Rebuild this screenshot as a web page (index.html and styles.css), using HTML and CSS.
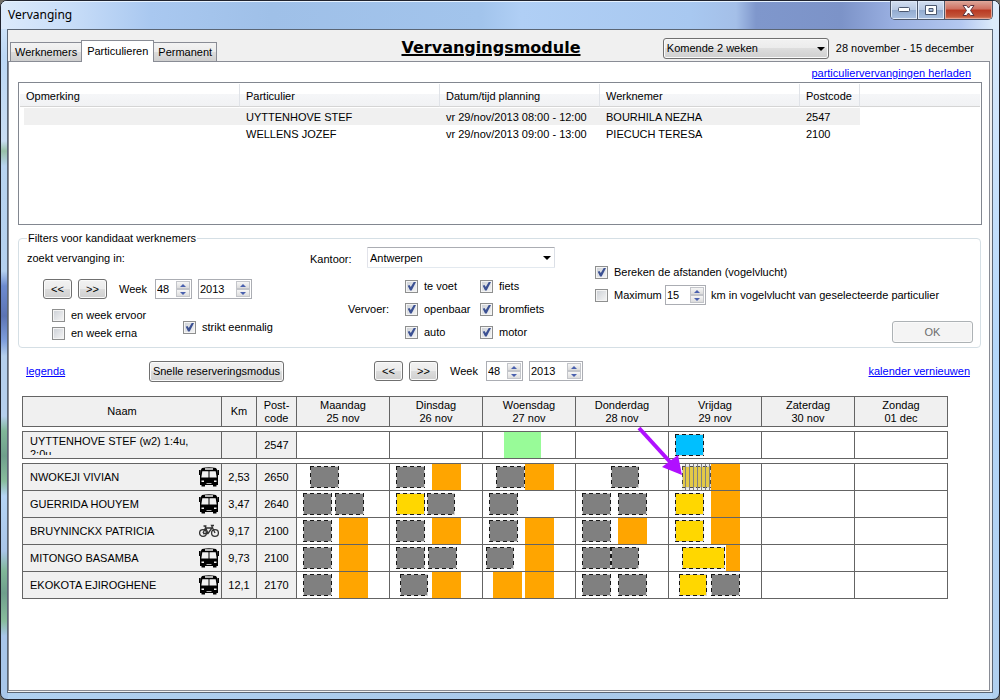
FILE: index.html
```html
<!DOCTYPE html>
<html lang="nl">
<head>
<meta charset="utf-8">
<title>Vervanging</title>
<link rel="stylesheet" href="styles.css">
</head>
<body>
<svg class="defs" aria-hidden="true">
  <symbol id="bus" viewBox="0 0 20 20">
    <path d="M3 1Q10-.5 17 1L18.500 3.500L19 8V18H17.500V19.500H14V18H6V19.500H2.500V18H1V8L1.500 3.500Z"/>
    <path d="M0 3H1.500V8H0ZM18.500 3H20V8H18.500Z"/>
    <path fill="#f0f0f0" d="M6 1.300H14V2.800H6ZM3.300 4.300H9.500V10.500H2.300ZM10.500 4.300H16.700L17.700 10.500H10.500ZM2.500 13.500H5V15H2.500ZM15 13.500H17.500V15H15ZM7.500 16H12.500V16.700H7.500Z"/>
  </symbol>
  <symbol id="bike" viewBox="0 0 20 14">
    <g fill="none" stroke="#333" stroke-width="1.300">
      <circle cx="4" cy="9" r="3.400"/><circle cx="16" cy="9" r="3.400"/>
      <path d="M4 9L6.500 4H13L9 9.500H4M9 9.500L6 2M4.500 2H7.500M16 9L12.500 1.500H15"/>
    </g>
  </symbol>
</svg>
<div class="window">
  <header class="titlebar">
    <span class="caption">Vervanging</span>
    <div class="winbtns">
      <button class="wb" aria-label="Minimaliseren"><svg width="12" height="6" viewBox="0 0 12 6"><rect x=".5" y=".5" width="11" height="4" rx="1" fill="#fff" stroke="#4c5870"/></svg></button>
      <button class="wb" aria-label="Maximaliseren"><svg width="12" height="10" viewBox="0 0 12 10"><path fill="#fff" fill-rule="evenodd" stroke="#4c5870" d="M.5.5H11.500V9.500H.5ZM4 3.500V6.500H8V3.500Z"/></svg></button>
      <button class="wb close" aria-label="Sluiten"><svg width="13" height="11" viewBox="0 0 13 11"><path fill="#fff" stroke="#5b3440" d="M1 .5H4.500L6.500 3L8.500.5H12L8.500 5.500L12 10.500H8.500L6.500 8L4.500 10.500H1L4.500 5.500Z"/></svg></button>
    </div>
  </header>
  <main class="client">
    <div class="head">
      <nav class="tabs" role="tablist">
        <button class="tab" role="tab">Werknemers</button>
        <button class="tab active" role="tab" aria-selected="true">Particulieren</button>
        <button class="tab" role="tab">Permanent</button>
      </nav>
      <h1>Vervangingsmodule</h1>
      <div class="period">
        <span class="select raised"><select aria-label="Periode"><option>Komende 2 weken</option></select></span>
        <span class="range">28 november - 15 december</span>
      </div>
    </div>
    <section class="page">
      <div class="reload"><a href="#">particuliervervangingen herladen</a></div>
      <div class="listview">
        <table class="list">
          <colgroup><col class="c-note"><col class="c-name"><col class="c-date"><col class="c-name"><col class="c-post"><col></colgroup>
          <thead><tr><th>Opmerking</th><th>Particulier</th><th>Datum/tijd planning</th><th>Werknemer</th><th>Postcode</th><th></th></tr></thead>
          <tbody>
            <tr class="sel"><td></td><td>UYTTENHOVE STEF</td><td>vr 29/nov/2013 08:00 - 12:00</td><td>BOURHILA NEZHA</td><td>2547</td><td></td></tr>
            <tr><td></td><td>WELLENS JOZEF</td><td>vr 29/nov/2013 09:00 - 13:00</td><td>PIECUCH TERESA</td><td>2100</td><td></td></tr>
          </tbody>
        </table>
      </div>

      <fieldset class="filters">
        <legend>Filters voor kandidaat werknemers</legend>
        <div class="f-week">
          <div>zoekt vervanging in:</div>
          <div class="weekpick">
            <button class="btn nav">&lt;&lt;</button>
            <button class="btn nav">&gt;&gt;</button>
            <label for="fw">Week</label>
            <span class="spin s2"><input id="fw" type="number" value="48"><span class="arrows"><button aria-label="Omhoog"></button><button class="down" aria-label="Omlaag"></button></span></span>
            <span class="spin s4"><input aria-label="Jaar" type="number" value="2013"><span class="arrows"><button aria-label="Omhoog"></button><button class="down" aria-label="Omlaag"></button></span></span>
          </div>
          <div class="weekopts">
            <div class="stack">
              <label class="check"><input type="checkbox">en week ervoor</label>
              <label class="check"><input type="checkbox">en week erna</label>
            </div>
            <label class="check"><input type="checkbox" checked>strikt eenmalig</label>
          </div>
        </div>
        <div class="f-office">
          <div class="office">
            <label for="kantoor">Kantoor:</label>
            <span class="select flat"><select id="kantoor"><option>Antwerpen</option></select></span>
          </div>
          <div class="transport">
            <span class="tlabel">Vervoer:</span>
            <div class="modes">
              <label class="check"><input type="checkbox" checked>te voet</label>
              <label class="check"><input type="checkbox" checked>fiets</label>
              <label class="check"><input type="checkbox" checked>openbaar</label>
              <label class="check"><input type="checkbox" checked>bromfiets</label>
              <label class="check"><input type="checkbox" checked>auto</label>
              <label class="check"><input type="checkbox" checked>motor</label>
            </div>
          </div>
        </div>
        <div class="f-distance">
          <label class="check"><input type="checkbox" checked>Bereken de afstanden (vogelvlucht)</label>
          <div class="max">
            <label class="check"><input type="checkbox">Maximum</label>
            <span class="spin s2b"><input id="km" type="number" value="15"><span class="arrows"><button aria-label="Omhoog"></button><button class="down" aria-label="Omlaag"></button></span></span>
            <label for="km">km in vogelvlucht van geselecteerde particulier</label>
          </div>
          <button class="btn ok" disabled>OK</button>
        </div>
      </fieldset>

      <div class="toolbar">
        <div class="t-left"><a href="#">legenda</a><button class="btn quick">Snelle reserveringsmodus</button></div>
        <div class="weekpick">
          <button class="btn nav">&lt;&lt;</button>
          <button class="btn nav">&gt;&gt;</button>
          <label for="cw">Week</label>
          <span class="spin s2"><input id="cw" type="number" value="48"><span class="arrows"><button aria-label="Omhoog"></button><button class="down" aria-label="Omlaag"></button></span></span>
          <span class="spin s4"><input aria-label="Jaar" type="number" value="2013"><span class="arrows"><button aria-label="Omhoog"></button><button class="down" aria-label="Omlaag"></button></span></span>
        </div>
        <a class="renew" href="#">kalender vernieuwen</a>
      </div>

      <div class="calwrap">
      <table class="cal">
        <colgroup><col class="k-name"><col class="k-km"><col class="k-post"><col><col><col><col><col><col><col></colgroup>
        <thead><tr><th>Naam</th><th>Km</th><th>Post-<br>code</th><th>Maandag<br>25 nov</th><th>Dinsdag<br>26 nov</th><th>Woensdag<br>27 nov</th><th>Donderdag<br>28 nov</th><th>Vrijdag<br>29 nov</th><th>Zaterdag<br>30 nov</th><th>Zondag<br>01 dec</th></tr></thead>
        <tbody>
          <tr class="gap"><td colspan="10"></td></tr>
          <tr><td class="n"><div class="clip">UYTTENHOVE STEF (w2) 1:4u, 2:0u</div></td><td class="v"></td><td class="v">2547</td>
            <td></td><td></td>
            <td><div class="day"><i class="free green" style="left:22.8%;width:40.2%"></i></div></td><td></td>
            <td><div class="day"><i class="task blue" style="left:6.5%;width:31.5%"></i></div></td><td></td><td></td></tr>
          <tr class="gap"><td colspan="10"></td></tr>
          <tr><td class="n"><div class="who">NWOKEJI VIVIAN<svg class="bus" role="img" aria-label="bus"><use href="#bus"/></svg></div></td><td class="v">2,53</td><td class="v">2650</td>
            <td><div class="day"><i class="task" style="left:14.1%;width:31.5%"></i></div></td>
            <td><div class="day"><i class="task" style="left:6.5%;width:31.5%"></i><i class="free" style="left:45.7%;width:31.5%"></i></div></td>
            <td><div class="day"><i class="task" style="left:14.1%;width:31.5%"></i><i class="free" style="left:45.7%;width:31.5%"></i></div></td>
            <td><div class="day"><i class="task" style="left:38%;width:30.4%"></i></div></td>
            <td><div class="day"><i class="task match" style="left:14.1%;width:31.5%"></i><i class="hatch" style="left:14.1%;width:31.5%"></i><i class="free" style="left:45.7%;width:31.5%"></i>
              <svg class="pointer" viewBox="0 0 48 52" aria-hidden="true"><path d="M3 2L35 37" stroke="#b010ff" stroke-width="4"/><path d="M46 49L26 41L42 29Z" fill="#b010ff"/></svg></div></td><td></td><td></td></tr>
          <tr><td class="n"><div class="who">GUERRIDA HOUYEM<svg class="bus" role="img" aria-label="bus"><use href="#bus"/></svg></div></td><td class="v">3,47</td><td class="v">2640</td>
            <td><div class="day"><i class="task" style="left:6.5%;width:31.5%"></i><i class="task" style="left:41.3%;width:31.5%"></i></div></td>
            <td><div class="day"><i class="task yellow" style="left:6.5%;width:31.5%"></i><i class="task" style="left:40.2%;width:30.4%"></i></div></td>
            <td><div class="day"><i class="task" style="left:6.5%;width:31.5%"></i></div></td>
            <td><div class="day"><i class="task" style="left:6.5%;width:31.5%"></i><i class="task" style="left:45.7%;width:31.5%"></i></div></td>
            <td><div class="day"><i class="task yellow" style="left:6.5%;width:31.5%"></i><i class="free" style="left:45.7%;width:31.5%"></i></div></td><td></td><td></td></tr>
          <tr><td class="n"><div class="who">BRUYNINCKX PATRICIA<svg class="bike" role="img" aria-label="fiets"><use href="#bike"/></svg></div></td><td class="v">9,17</td><td class="v">2100</td>
            <td><div class="day"><i class="task" style="left:6.5%;width:31.5%"></i><i class="free" style="left:45.7%;width:31.5%"></i></div></td>
            <td><div class="day"><i class="task" style="left:6.5%;width:31.5%"></i><i class="free" style="left:45.7%;width:31.5%"></i></div></td>
            <td><div class="day"><i class="task" style="left:6.5%;width:31.5%"></i><i class="free" style="left:45.7%;width:31.5%"></i></div></td>
            <td><div class="day"><i class="task" style="left:6.5%;width:31.5%"></i><i class="free" style="left:45.7%;width:31.5%"></i></div></td>
            <td><div class="day"><i class="task yellow" style="left:6.5%;width:31.5%"></i><i class="free" style="left:45.7%;width:31.5%"></i></div></td><td></td><td></td></tr>
          <tr><td class="n"><div class="who">MITONGO BASAMBA<svg class="bus" role="img" aria-label="bus"><use href="#bus"/></svg></div></td><td class="v">9,73</td><td class="v">2100</td>
            <td><div class="day"><i class="task" style="left:6.5%;width:31.5%"></i><i class="free" style="left:45.7%;width:31.5%"></i></div></td>
            <td><div class="day"><i class="task" style="left:6.5%;width:31.5%"></i><i class="task" style="left:41.3%;width:31.5%"></i></div></td>
            <td><div class="day"><i class="task" style="left:3.3%;width:30.4%"></i><i class="free" style="left:45.7%;width:31.5%"></i></div></td>
            <td><div class="day"><i class="task" style="left:6.5%;width:31.5%"></i><i class="task" style="left:38%;width:30.4%"></i></div></td>
            <td><div class="day"><i class="task yellow" style="left:14.1%;width:46.7%"></i><i class="free" style="left:62%;width:15.2%"></i></div></td><td></td><td></td></tr>
          <tr><td class="n"><div class="who">EKOKOTA EJIROGHENE<svg class="bus" role="img" aria-label="bus"><use href="#bus"/></svg></div></td><td class="v">12,1</td><td class="v">2170</td>
            <td><div class="day"><i class="task" style="left:6.5%;width:31.5%"></i><i class="free" style="left:45.7%;width:31.5%"></i></div></td>
            <td><div class="day"><i class="task" style="left:10.9%;width:30.4%"></i><i class="free" style="left:45.7%;width:31.5%"></i></div></td>
            <td><div class="day"><i class="free" style="left:10.9%;width:31.5%"></i><i class="free" style="left:45.7%;width:31.5%"></i></div></td>
            <td><div class="day"><i class="task" style="left:6.5%;width:31.5%"></i><i class="task" style="left:45.7%;width:31.5%"></i></div></td>
            <td><div class="day"><i class="task yellow" style="left:10.9%;width:30.4%"></i><i class="task" style="left:45.7%;width:31.5%"></i></div></td><td></td><td></td></tr>
        </tbody>
      </table>
      </div>
    </section>
  </main>
</div>
</body>
</html>
```
FILE: styles.css
```css
* { box-sizing: border-box; }
body { margin: 0; background: #6f6c66; color: #000; font: 11px/14px "Liberation Sans", sans-serif; }
button, input, select { font: inherit; color: inherit; margin: 0; padding: 0; border-radius: 0; }
a { color: #00f; text-decoration: underline; }
.defs { display: none; }

/* window frame */
.window {
  min-height: 100vh; display: flex; flex-direction: column;
  padding: 0 6px 6px; border: 1px solid #20232e; border-radius: 7px;
  background:
    linear-gradient(#dcebfc 0, #bcd8f5 55px, #c8dcf2 140px, #98c0a8 150px, #b8d4f0 165px, #b4d0ef 270px, #6d8bd0 285px, #5c74b4 315px, #7f9fdd 340px, #b5cfec 355px, #b5cfec 415px, #80b798 430px, #6f9f8c 455px, #88bd9d 480px, #b5d4f5 495px, #a9c5e8 550px, #80b798 570px, #6f9f8c 592px, #88bd9d 620px, #a8c6ea 635px) left / 7px 100% no-repeat,
    linear-gradient(#dcebfc, #b4d7fa 50%, #b0cfee) right / 7px 100% no-repeat,
    linear-gradient(90deg, #b0d0f0, #a9c9ea 60%, #b6d4f4) #a9c8ee;
}
.titlebar {
  height: 28px; display: flex; justify-content: space-between; margin: 0 -6px; padding: 0 0 0 7px;
  border-radius: 6px 6px 0 0; box-shadow: inset 0 1px #e6f2ff;
  background: linear-gradient(90deg, #dceafb 0, #c8ddf8 70px, #a9c8f0 150px, #9fc0e8 270px, #a2c4ec 480px, #b0cff5 520px, #a8c8f0 690px, #a4bfe8 735px, #7f97cc 755px, #7c93c8 840px, #98aee0 890px, #b4c8f0 960px, #dcebfb 992px);
}
.caption { font: 12px/28px "Noto Sans", sans-serif; }
.winbtns { display: flex; height: 19px; margin-right: 6px; border: 1px solid #4d586c; border-top: 0; border-radius: 0 0 5px 5px; overflow: hidden; }
.wb { width: 27px; display: flex; align-items: center; justify-content: center; border: 0; border-right: 1px solid #4d586c; background: linear-gradient(#d3def0, #b7c8e2 50%, #93abcf 51%, #a9c0e2); box-shadow: inset 0 0 0 1px #dfe9f8; }
.close { width: 47px; border: 0; background: linear-gradient(#dca79b, #cf6f5f 45%, #b93822 50%, #c2553a 85%, #dc8a6a); box-shadow: inset 0 0 0 1px #e3a698; }
.client { flex: 1; display: flex; flex-direction: column; border: 1px solid #5b6675; background: #f0f0f0; }

/* tabs and heading */
.head { display: grid; grid-template-columns: 1fr auto 1fr; align-items: center; height: 31px; padding-right: 18px; }
.tabs { display: flex; align-items: flex-end; align-self: end; padding-left: 2px; }
.tab { height: 19px; padding: 0 4px; border: 1px solid #898c95; border-bottom: 0; margin-right: -1px; background: linear-gradient(#f3f3f3, #ebebeb 50%, #dcdcdc 51%, #cfcfcf); }
.tab.active { height: 22px; padding: 0 5px 2px; background: #fff; z-index: 1; margin-bottom: -1px; }
h1 { margin: 4px 0 0; font: bold 16px/20px "DejaVu Sans", sans-serif; text-decoration: underline; text-decoration-thickness: 2px; }
.period { display: flex; align-items: center; justify-content: flex-end; gap: 7px; padding-top: 5px; white-space: nowrap; }
.page { flex: 1; margin: 0 2px 1px 0; padding: 0 7px 0 9px; border: 1px solid #898c95; background: #fff; }

/* form controls */
.select { position: relative; display: inline-flex; }
.select select { appearance: none; width: 100%; height: 21px; padding: 0 18px 0 3px; border: 1px solid #707070; border-radius: 3px; background: linear-gradient(#f2f2f2, #ebebeb 49%, #dddddd 50%, #cfcfcf); box-shadow: inset 0 0 0 1px #fafafa; }
.select::after { content: ""; position: absolute; right: 4px; top: 9px; border: 4px solid transparent; border-top-color: #000; border-bottom: 0; pointer-events: none; }
.raised { width: 166px; }
.flat { width: 188px; }
.flat select { border-color: #abadb3 #dbdfe6 #e3e9ef #e2e3ea; border-radius: 1px; background: #fff; box-shadow: none; padding-left: 2px; }
.btn { height: 21px; border: 1px solid #707070; border-radius: 3px; background: linear-gradient(#f2f2f2, #ebebeb 49%, #dddddd 50%, #cfcfcf); box-shadow: inset 0 0 0 1px #fafafa; }
.nav { width: 29px; height: 20px; }
.quick { width: 135px; white-space: nowrap; }
.ok { width: 81px; height: 22px; border-color: #adb2b5; background: #f4f4f4; color: #6d6d6d; }
.spin { display: inline-flex; height: 20px; padding: 1px; border: 1px solid #abadb3; background: #fff; }
.spin input { flex: 1; min-width: 0; border: 0; background: none; outline: 0; appearance: textfield; -moz-appearance: textfield; }
.spin input::-webkit-inner-spin-button { appearance: none; margin: 0; }
.s2 { width: 37px; }
.s2b { width: 41px; }
.s4 { width: 54px; }
.arrows { display: flex; flex-direction: column; width: 14px; }
.arrows button { flex: 1; display: flex; align-items: center; justify-content: center; border: 1px solid #c3c5ca; background: linear-gradient(#f6f6f6, #dcdcdc); }
.arrows button::after { content: ""; border: 3px solid transparent; border-bottom-color: #4a61ae; border-top: 0; }
.arrows .down::after { border: 3px solid transparent; border-top-color: #4a61ae; border-bottom: 0; }
.check { display: flex; align-items: center; gap: 6px; white-space: nowrap; }
.check input { appearance: none; flex: none; width: 13px; height: 13px; border: 1px solid #8e8f8f; background: linear-gradient(135deg, #cbcfd5, #f6f6f6); box-shadow: inset 0 0 0 1px #f4f4f4; }
.check input:checked::before { content: ""; display: block; width: 9px; height: 9px; margin: 1px; background: #3c5193; clip-path: polygon(8% 46%, 28% 38%, 42% 62%, 78% 0, 100% 6%, 52% 100%, 34% 100%); }

/* request list */
.reload { padding: 4px 11px 0 0; height: 20px; text-align: right; }
.listview { height: 143px; padding: 1px; border: 1px solid #828790; }
.list { width: 100%; table-layout: fixed; border-collapse: separate; border-spacing: 0; }
.c-note { width: 220px; }
.c-name { width: 200px; }
.c-date { width: 160px; }
.c-post { width: 60px; }
.list th, .list td { text-align: left; font-weight: normal; white-space: nowrap; padding: 0 0 0 6px; }
.list th { height: 23px; padding-top: 2px; border-bottom: 1px solid #d5d5d5; border-right: 1px solid #e0e3e8; background: linear-gradient(#fff 45%, #f5f6f8 46%, #f1f2f4); }
.list th:last-child { border-right: 0; }
.list td { height: 17px; }
.list tbody::before { content: ""; display: table-row; height: 1px; }
.sel td { background: #f0f0f0; }
.sel td:first-child { border-left: 4px solid #fff; }
.sel td:last-child { background: #fff; }

/* filters */
.filters { display: grid; grid-template-columns: 283px 285px 1fr; margin: 5px 1px 0 0; padding: 3px 7px 0 8px; border: 1px solid #d5dfe5; border-radius: 4px; height: 118px; min-width: 0; }
.filters legend { padding: 0 1px; line-height: 16px; }
.f-week { padding-top: 2px; }
.weekpick { display: flex; align-items: center; gap: 6px; }
.weekpick label { width: 30px; margin-left: 6px; }
.f-week .weekpick { margin: 14px 0 0 16px; }
.weekopts { display: flex; align-items: center; margin: 9px 0 0 25px; }
.stack { display: grid; gap: 4px; width: 131px; }
.weekopts > .check { padding-top: 6px; }
.office { display: flex; align-items: center; }
.office label { width: 57px; }
.office .select { margin-top: -2px; }
.transport { display: flex; align-items: center; margin: 11px 0 0 38px; }
.tlabel { width: 57px; }
.modes { display: grid; grid-template-columns: 75px auto; row-gap: 9px; }
.f-distance { display: flex; flex-direction: column; padding-top: 16px; }
.max { display: flex; align-items: center; gap: 5px; height: 20px; margin-top: 6px; white-space: nowrap; }
.max .check { width: 65px; }
.ok { align-self: flex-end; margin-top: 16px; }

/* calendar toolbar */
.toolbar { display: flex; align-items: center; margin-top: 12px; padding: 0 12px 0 8px; height: 22px; }
.t-left { display: flex; align-items: center; justify-content: space-between; width: 258px; margin-right: 90px; }
.renew { margin-left: auto; }

/* calendar */
.calwrap { padding: 14px 34px 0 4px; }
.cal { width: 100%; table-layout: fixed; border-collapse: collapse; }
.k-name { width: 199px; }
.k-km { width: 35px; }
.k-post { width: 40px; }
.cal th, .cal td { height: 27px; padding: 0; border: 1px solid #646464; }
.cal th { height: 30px; font-weight: normal; line-height: 13px; background: #f0f0f0; }
.cal .gap td { height: 5px; border-left: 0; border-right: 0; }
.cal .n, .cal .v { background: #f0f0f0; }
.cal .v { text-align: center; }
.clip { height: 20px; line-height: 13px; padding: 0 24px 0 7px; overflow: hidden; }
.who { display: flex; align-items: center; justify-content: space-between; padding: 0 2px 0 7px; white-space: nowrap; }
.bus { width: 20px; height: 20px; }
.bike { width: 20px; height: 14px; }
.day { position: relative; height: 26px; }
.day i { position: absolute; top: 0; height: 26px; }
.day .free { background: #ffa500; }
.day .green { background: #98fb98; }
.day .task {
  --fill: #808080; top: 2px; height: 22px;
  background:
    repeating-linear-gradient(90deg, #181818 0 4px, #d8d8d8 4px 7px) top / 100% 1px no-repeat,
    repeating-linear-gradient(90deg, #181818 0 4px, #d8d8d8 4px 7px) bottom / 100% 1px no-repeat,
    repeating-linear-gradient(#181818 0 4px, #d8d8d8 4px 7px) left / 1px 100% no-repeat,
    repeating-linear-gradient(#181818 0 4px, #d8d8d8 4px 7px) right / 1px 100% no-repeat,
    var(--fill);
}
.day .yellow { --fill: #ffd700; }
.day .blue { --fill: #00bfff; }
.day .match { --fill: #f0cb10; }
.day .hatch { background: repeating-linear-gradient(90deg, transparent 0 3px, #808080 3px 4px); background-color: rgba(200, 200, 200, .3); }
.pointer { position: absolute; left: -33px; top: -38px; width: 48px; height: 52px; z-index: 2; }
```
